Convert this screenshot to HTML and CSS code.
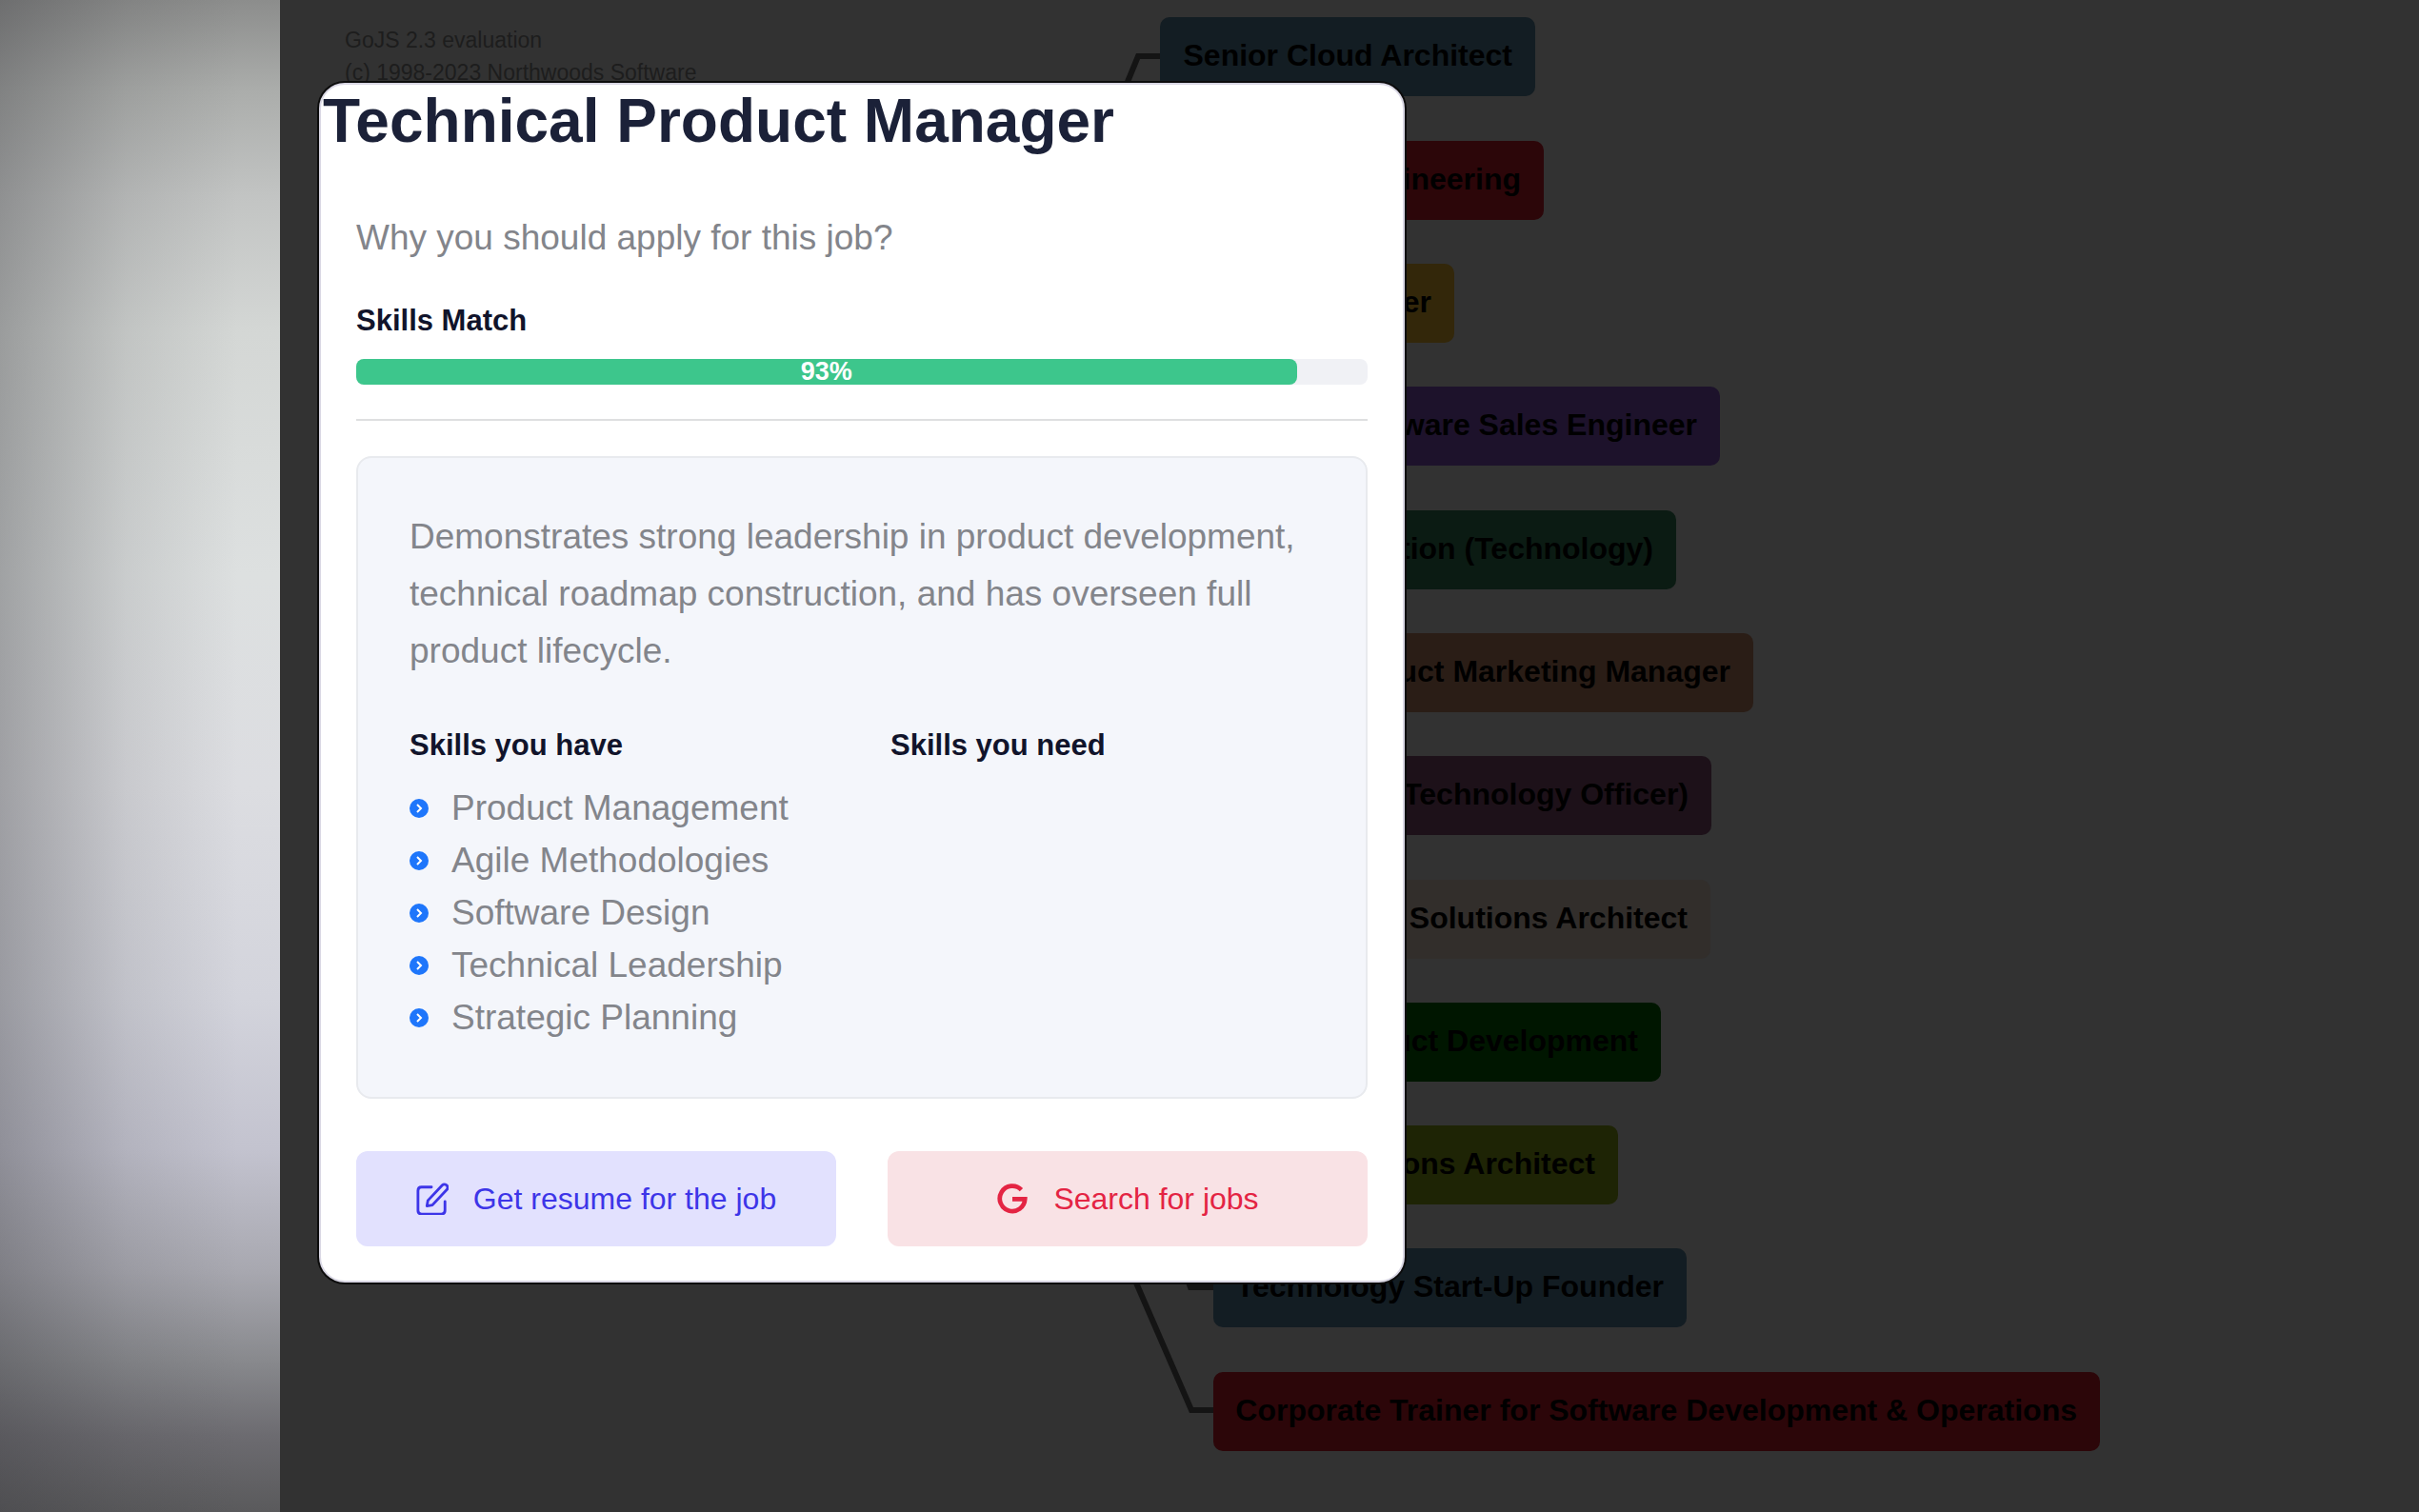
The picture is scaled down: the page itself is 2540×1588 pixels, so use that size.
FILE: index.html
```html
<!DOCTYPE html>
<html lang="en">
<head>
<meta charset="utf-8">
<meta name="viewport" content="width=device-width, initial-scale=1">
<title>Technical Product Manager</title>
<link rel="stylesheet" href="styles.css">
</head>
<body>
<div class="app">
  <aside class="backdrop"></aside>
  <main class="canvas">
    <p class="watermark">GoJS 2.3 evaluation<br>(c) 1998-2023 Northwoods Software</p>
    <svg class="links" viewBox="0 0 1000 1588" width="1000" height="1588" aria-hidden="true">
      <path d="M876 120 L901 59 H924 M898 1345 L957 1481 H980 M900 1200 L956 1352 H980"/>
    </svg>
    <div class="node steel first">Senior Cloud Architect</div>
    <div class="node crimson n2">VP of Engineering</div>
    <div class="node gold n3">IT Manager</div>
    <div class="node purple n4">Software Sales Engineer</div>
    <div class="node teal n5">Education (Technology)</div>
    <div class="node copper n6">Product Marketing Manager</div>
    <div class="node plum n7">CTO (Chief Technology Officer)</div>
    <div class="node linen n8">Enterprise Solutions Architect</div>
    <div class="node green n9">VP of Product Development</div>
    <div class="node olive n10">IT Solutions Architect</div>
    <div class="node steel n11">Technology Start-Up Founder</div>
    <div class="node crimson n12">Corporate Trainer for Software Development &amp; Operations</div>

    <section class="modal" role="dialog" aria-labelledby="job-title">
      <h1 class="title" id="job-title">Technical Product Manager</h1>
      <div class="content">
        <p class="lead">Why you should apply for this job?</p>
        <h2 class="heading">Skills Match</h2>
        <div class="progress"><div class="progress-bar" style="width: 93%">93%</div></div>
        <hr class="rule">
        <div class="card">
          <p class="summary">Demonstrates strong leadership in product development, technical roadmap construction, and has overseen full product lifecycle.</p>
          <div class="skills">
            <div class="column">
              <h2 class="heading">Skills you have</h2>
              <ul class="list">
                <li><svg class="bullet" viewBox="0 0 20 20"><circle cx="10" cy="10" r="10"/><path d="M8 6 L12 10 L8 14"/></svg>Product Management</li>
                <li><svg class="bullet" viewBox="0 0 20 20"><circle cx="10" cy="10" r="10"/><path d="M8 6 L12 10 L8 14"/></svg>Agile Methodologies</li>
                <li><svg class="bullet" viewBox="0 0 20 20"><circle cx="10" cy="10" r="10"/><path d="M8 6 L12 10 L8 14"/></svg>Software Design</li>
                <li><svg class="bullet" viewBox="0 0 20 20"><circle cx="10" cy="10" r="10"/><path d="M8 6 L12 10 L8 14"/></svg>Technical Leadership</li>
                <li><svg class="bullet" viewBox="0 0 20 20"><circle cx="10" cy="10" r="10"/><path d="M8 6 L12 10 L8 14"/></svg>Strategic Planning</li>
              </ul>
            </div>
            <div class="column">
              <h2 class="heading">Skills you need</h2>
            </div>
          </div>
        </div>
        <div class="actions">
          <button class="button resume" type="button">
            <svg class="icon" viewBox="0 0 36 36" fill="none" stroke="currentColor" stroke-width="3" stroke-linecap="round" stroke-linejoin="round"><path d="M17 5 H6 Q2 5 2 9 V31 Q2 35 6 35 H28 Q32 35 32 31 V21"/><path d="M12 26 L13 20 L29 3 Q31 1 34 3 Q36 6 34 8 L18 25 Z"/></svg>
            Get resume for the job
          </button>
          <button class="button search" type="button">
            <svg class="icon" viewBox="0 0 36 36" fill="none" stroke="currentColor" stroke-width="5"><path d="M28 8 A14 14 0 1 0 32 18.500 H18"/></svg>
            Search for jobs
          </button>
        </div>
      </div>
    </section>
  </main>
</div>
</body>
</html>
```
FILE: styles.css
```css
* { box-sizing: border-box; }
body {
  margin: 0;
  background: #323232;
  font-family: "Liberation Sans", Arial, sans-serif;
}
h1, h2, p, ul { margin: 0; padding: 0; }
.app {
  display: grid;
  grid-template-columns: 294px 1fr;
  min-height: 100vh;
}
.backdrop {
  background:
    linear-gradient(90deg, rgba(60, 60, 64, .38), rgba(60, 60, 64, .12) 45%, transparent 85%),
    linear-gradient(180deg, #8c8d8c 0%, #abadab 6%, #c2c4c3 13%, #d4d7d5 22%, #dde0e0 38%, #dcdde1 52%, #d3d4dc 66%, #c3c3cf 76%, #a8a8b0 84%, #88898d 90%, #6c6b70 95%, #5a5a5c 100%);
}
.canvas {
  position: relative;
  overflow: hidden;
  padding: 25px 0 0 41px;
  background: #323232;
}
.watermark {
  padding-left: 27px;
  color: #1d1d1d;
  font-size: 23px;
  line-height: 34px;
  height: 62px;
}
.links {
  position: absolute;
  left: 0;
  top: 0;
  fill: none;
  stroke: #141414;
  stroke-width: 6;
}
.node {
  position: absolute;
  left: 980px;
  display: flex;
  justify-content: flex-end;
  height: 83px;
  padding: 21px 24px 0 0;
  border-radius: 10px;
  color: #000;
  font-size: 32px;
  font-weight: 700;
  line-height: 38px;
  white-space: nowrap;
}
.first { left: 924px; top: 18px; width: 394px; }
.n2 { top: 148px; width: 347px; }
.n3 { top: 277px; width: 253px; }
.n4 { top: 406px; width: 532px; }
.n5 { top: 536px; width: 486px; }
.n6 { top: 665px; width: 567px; }
.n7 { top: 794px; width: 523px; }
.n8 { top: 924px; width: 522px; }
.n9 { top: 1053px; width: 470px; }
.n10 { top: 1182px; width: 425px; }
.n11 { top: 1311px; width: 497px; }
.n12 { top: 1441px; width: 931px; }
.steel { background: #131d23; }
.crimson { background: #2c0609; }
.gold { background: #33270a; }
.purple { background: #1d122b; }
.teal { background: #0b1b13; }
.copper { background: #2a1d16; }
.plum { background: #1d1119; }
.linen { background: #322e2b; }
.green { background: #001600; }
.olive { background: #1e2405; }

.modal {
  position: relative;
  width: 1140px;
  max-width: calc(100% - 41px);
  border: 2px solid #d9d7e4;
  border-radius: 27px;
  background: #fff;
  box-shadow: 0 0 0 2px #0c0c0c;
}
.title {
  padding: 4px 0 0 2px;
  color: #1b2138;
  font-size: 64px;
  line-height: 68px;
}
.content { padding: 62px 37px 36px; }
.lead {
  color: #83858b;
  font-size: 37px;
  line-height: 54px;
}
.heading {
  color: #11142b;
  font-size: 31px;
  line-height: 40px;
}
.content > .heading { margin-top: 40px; }
.progress {
  height: 27px;
  margin-top: 20px;
  border-radius: 8px;
  background: #f0f1f5;
}
.progress-bar {
  height: 27px;
  border-radius: 8px;
  background: #3dc68c;
  color: #fff;
  font-size: 27px;
  font-weight: 700;
  line-height: 27px;
  text-align: center;
}
.rule {
  height: 2px;
  margin: 36px 0 37px;
  border: 0;
  background: #dedfe0;
}
.card {
  padding: 53px 54px 56px;
  border: 2px solid #e8eaee;
  border-radius: 16px;
  background: #f4f6fb;
}
.summary {
  color: #83858b;
  font-size: 37px;
  line-height: 60px;
}
.skills {
  display: grid;
  grid-template-columns: 1fr 1fr;
  gap: 60px;
  margin-top: 49px;
}
.list {
  margin-top: 18px;
  list-style: none;
  color: #83858b;
  font-size: 37px;
  line-height: 55px;
}
.list li {
  display: flex;
  align-items: center;
  gap: 24px;
}
.bullet {
  width: 20px;
  height: 20px;
  fill: #1e76fb;
}
.bullet path {
  fill: none;
  stroke: #fff;
  stroke-width: 2;
}
.actions {
  display: grid;
  grid-template-columns: 1fr 1fr;
  gap: 54px;
  margin-top: 55px;
}
.button {
  display: flex;
  align-items: center;
  justify-content: center;
  gap: 26px;
  height: 100px;
  padding: 0;
  border: 0;
  border-radius: 12px;
  font-family: inherit;
  font-size: 32px;
}
.resume { background: #e2e1fe; color: #3d35e8; }
.search { background: #f9e2e5; color: #e42443; }
.icon {
  width: 34px;
  height: 34px;
}
```
